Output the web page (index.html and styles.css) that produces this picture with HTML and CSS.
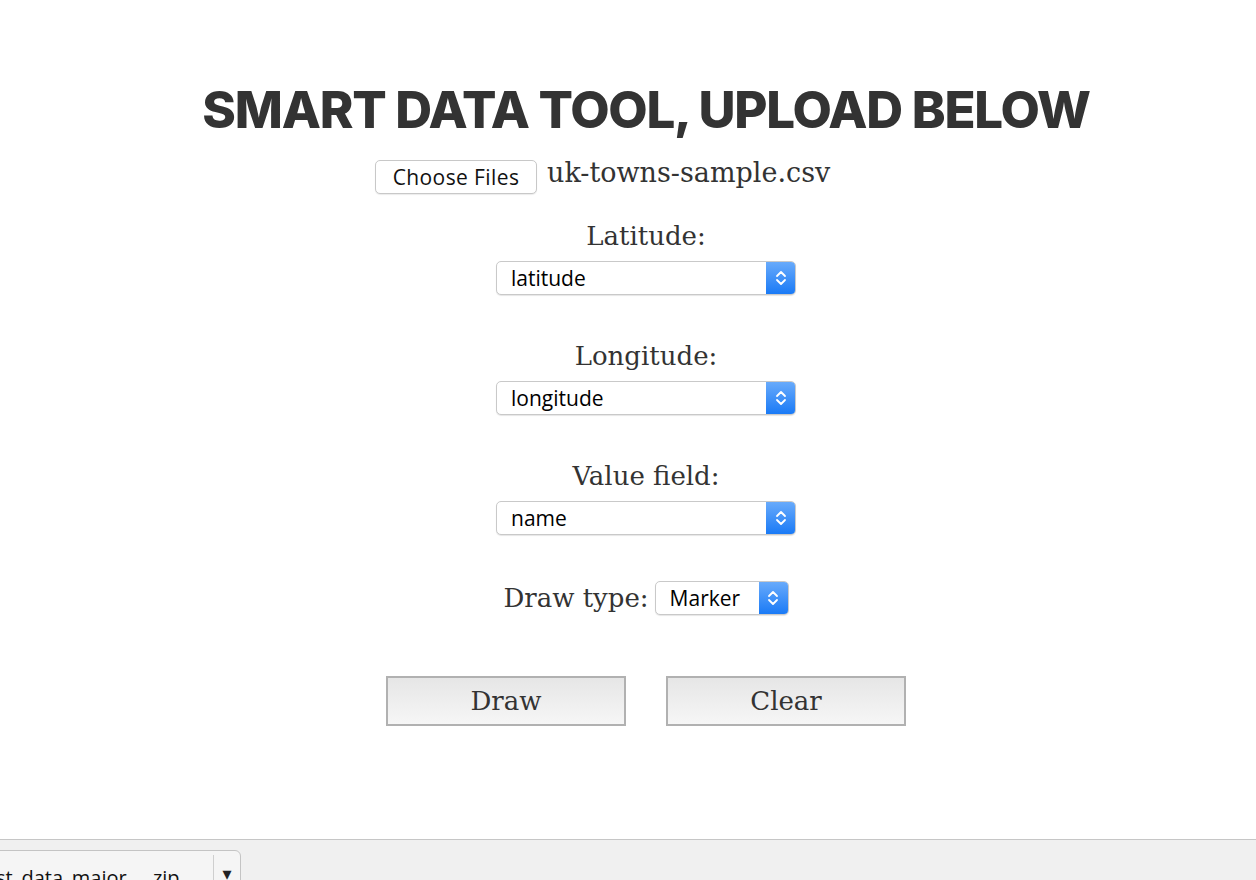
FILE: index.html
```html
<!DOCTYPE html>
<html lang="en">
<head>
<meta charset="utf-8">
<title>Smart Data Tool</title>
<link rel="stylesheet" href="styles.css">
</head>
<body>
<main class="page">
  <h1 class="title">SMART DATA TOOL, UPLOAD BELOW</h1>
  <div class="file-row">
    <button class="file-btn" type="button">Choose Files</button>
    <span class="file-name">uk-towns-sample.csv</span>
  </div>

  <div class="field">
    <div class="label">Latitude:</div>
    <div class="select wide"><span class="value">latitude</span><span class="arrow"><svg width="12" height="18" viewBox="0 0 12 18"><path d="M2 7 L6 3 L10 7 M2 11 L6 15 L10 11" fill="none" stroke="#fff" stroke-width="1.8" stroke-linecap="round" stroke-linejoin="round"/></svg></span></div>
  </div>

  <div class="field">
    <div class="label">Longitude:</div>
    <div class="select wide"><span class="value">longitude</span><span class="arrow"><svg width="12" height="18" viewBox="0 0 12 18"><path d="M2 7 L6 3 L10 7 M2 11 L6 15 L10 11" fill="none" stroke="#fff" stroke-width="1.8" stroke-linecap="round" stroke-linejoin="round"/></svg></span></div>
  </div>

  <div class="field">
    <div class="label">Value field:</div>
    <div class="select wide"><span class="value">name</span><span class="arrow"><svg width="12" height="18" viewBox="0 0 12 18"><path d="M2 7 L6 3 L10 7 M2 11 L6 15 L10 11" fill="none" stroke="#fff" stroke-width="1.8" stroke-linecap="round" stroke-linejoin="round"/></svg></span></div>
  </div>

  <div class="inline-field">
    <span class="label">Draw type:</span>
    <div class="select narrow"><span class="value">Marker</span><span class="arrow"><svg width="12" height="18" viewBox="0 0 12 18"><path d="M2 7 L6 3 L10 7 M2 11 L6 15 L10 11" fill="none" stroke="#fff" stroke-width="1.8" stroke-linecap="round" stroke-linejoin="round"/></svg></span></div>
  </div>

  <div class="actions">
    <button class="action" type="button">Draw</button>
    <button class="action" type="button">Clear</button>
  </div>
</main>
<footer class="shelf">
  <div class="download">
    <span class="dl-name">st_data_major.....zip</span>
    <span class="dl-sep"></span>
    <span class="dl-caret">&#9662;</span>
  </div>
</footer>
</body>
</html>
```
FILE: styles.css
```css
html, body {
  margin: 0;
  padding: 0;
  background: #fff;
}
body {
  height: 880px;
  display: flex;
  flex-direction: column;
  overflow: hidden;
  font-family: "DejaVu Serif", serif;
  color: #333;
}
.page {
  flex: 1;
  padding-left: 36px;
  display: flex;
  flex-direction: column;
  align-items: center;
}
.title {
  margin: 84px 0 0;
  font-family: "Inter", "Liberation Sans", sans-serif;
  font-weight: 800;
  font-size: 51px;
  line-height: 51px;
  letter-spacing: -1.25px;
  color: #333;
  white-space: nowrap;
}
.file-row {
  width: 542px;
  margin-top: 25px;
  display: flex;
  align-items: flex-start;
  gap: 10px;
}
.file-btn {
  box-sizing: border-box;
  width: 162px;
  height: 34px;
  margin: 0;
  padding: 0;
  background: #fff;
  border: 1px solid #c8c8c8;
  border-radius: 5px;
  box-shadow: 0 1px 1px rgba(0,0,0,0.08);
  font-family: "Open Sans", "Liberation Sans", sans-serif;
  font-size: 21px;
  letter-spacing: 0.4px;
  color: #111;
}
.file-name {
  font-size: 27px;
  line-height: 30px;
  margin-top: -2px;
  color: #333;
}
.field {
  display: flex;
  flex-direction: column;
  align-items: center;
  margin-top: 27px;
}
.field + .field {
  margin-top: 46px;
}
.label {
  font-size: 26px;
  line-height: 30px;
  color: #333;
}
.field .select {
  margin-top: 10px;
}
.select {
  box-sizing: border-box;
  height: 34px;
  display: flex;
  align-items: stretch;
  border: 1px solid #c9c9c9;
  border-radius: 5px;
  background: #fff;
  box-shadow: 0 1px 1px rgba(0,0,0,0.1);
  overflow: hidden;
}
.select.wide { width: 300px; }
.select.narrow { width: 134px; }
.value {
  flex: 1;
  padding-left: 14px;
  font-family: "Open Sans", "Liberation Sans", sans-serif;
  font-size: 21px;
  line-height: 32px;
  color: #000;
}
.arrow {
  width: 29px;
  display: flex;
  align-items: center;
  justify-content: center;
  background: linear-gradient(#68aafb, #1a7af6);
}
.inline-field {
  margin-top: 46px;
  display: flex;
  align-items: center;
  gap: 6px;
}
.actions {
  margin-top: 61px;
  display: flex;
  gap: 40px;
}
.action {
  box-sizing: border-box;
  width: 240px;
  height: 50px;
  margin: 0;
  border: 2px solid #b1b1b1;
  border-radius: 0;
  background: linear-gradient(#e6e6e6, #f6f6f6);
  font-family: "DejaVu Serif", serif;
  font-size: 26px;
  color: #333;
}
.shelf {
  height: 40px;
  flex: none;
  border-top: 1px solid #c6c6c6;
  background: #f0f0f0;
  overflow: hidden;
}
.download {
  box-sizing: border-box;
  width: 242px;
  height: 50px;
  margin: 10px 0 0 -1px;
  display: flex;
  align-items: flex-start;
  background: #f5f5f5;
  border: 1px solid #c4c4c4;
  border-radius: 0 6px 0 0;
}
.dl-name {
  flex: 1;
  margin-left: -4px;
  margin-top: 15px;
  font-family: "Open Sans", "Liberation Sans", sans-serif;
  font-size: 20px;
  line-height: 24px;
  color: #111;
  white-space: nowrap;
  overflow: hidden;
}
.dl-sep {
  width: 1px;
  height: 40px;
  margin-top: 4px;
  background: #cfcfcf;
}
.dl-caret {
  width: 26px;
  text-align: center;
  margin-top: 12px;
  font-family: "DejaVu Sans", sans-serif;
  font-size: 18px;
  color: #222;
}
```
